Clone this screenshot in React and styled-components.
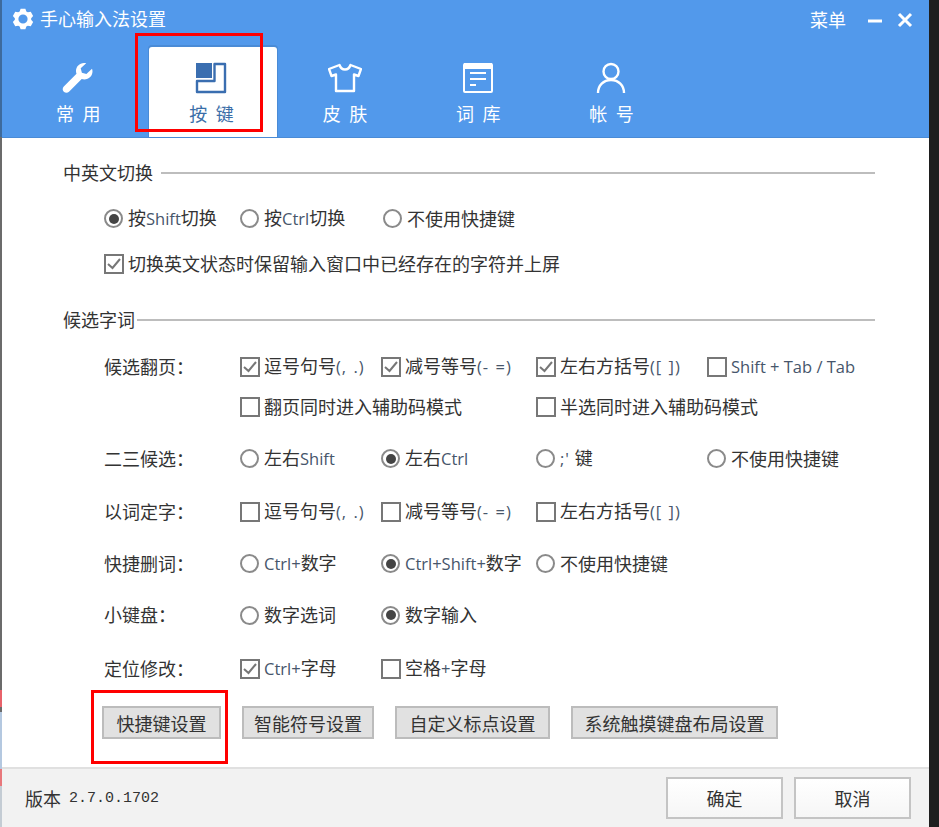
import styled, { createGlobalStyle } from "styled-components";

const GlobalStyle = createGlobalStyle`
  html, body {
    margin: 0;
    padding: 0;
    background: #1e1e1e;
  }
  body {
    width: 939px;
    height: 827px;
    overflow: hidden;
    font-family: "Open Sans", "Noto Sans CJK SC", sans-serif;
  }
`;

const Page = styled.div`
  position: relative;
  width: 939px;
  height: 827px;
  padding-left: 2px;
  box-sizing: border-box;
  background: linear-gradient(
    #3d6a9c 0 137px,
    #6b6b6b 137px 690px,
    #e8626a 690px 707px,
    #6b6b6b 707px 712px,
    #b4c8e0 712px 769px,
    #e8787c 769px 786px,
    #c4ccd4 786px
  );
  background-size: 2px 100%;
  background-repeat: no-repeat;
`;

const Window = styled.div`
  width: 927px;
  height: 827px;
  background: #fff;
  display: flex;
  flex-direction: column;
  color: #333;
  font-size: 18px;
`;

const Header = styled.div`
  height: 138px;
  box-sizing: border-box;
  background: #5299eb;
  border-bottom: 1px solid #4a8bd6;
  display: flex;
  flex-direction: column;
`;

const TitleBar = styled.div`
  height: 48px;
  display: flex;
  align-items: flex-start;
  padding: 8px 16px 0 10px;
  box-sizing: border-box;
  color: #fff;
`;

const Title = styled.span`
  margin-left: 6px;
  font-size: 18px;
  line-height: 22px;
  flex: 1;
`;

const Menu = styled.span`
  font-size: 18px;
  line-height: 24px;
  margin-right: 7px;
`;

const WinButton = styled.svg`
  width: 16px;
  height: 16px;
  margin-left: 14px;
  margin-top: 4px;
`;

const TabStrip = styled.div`
  display: flex;
  gap: 5.33px;
  padding-left: 14px;
  height: 90px;
`;

const Tab = styled.div`
  width: 128px;
  height: 90px;
  box-sizing: border-box;
  padding-top: 15px;
  display: flex;
  flex-direction: column;
  align-items: center;
  border-radius: 3px 3px 0 0;
  background: ${(props) => (props.$active ? "#fff" : "transparent")};
  box-shadow: ${(props) => (props.$active ? "0 -1px 0 1px #4a8bd6" : "none")};
  color: ${(props) => (props.$active ? "#3a6ea8" : "#fff")};
`;

const TabIcon = styled.svg`
  width: 34px;
  height: 32px;
  display: block;
  margin-right: 4px;
`;

const TabLabel = styled.span`
  margin-top: 8px;
  font-size: 18px;
  line-height: 24px;
  letter-spacing: 8.5px;
  margin-right: -5px;
`;

const Content = styled.div`
  flex: 1;
  padding: 23px 54px 0 61px;
`;

const SectionHead = styled.div`
  display: flex;
  align-items: center;
  height: 24px;
  gap: ${(props) => props.$gap}px;
  margin-top: ${(props) => props.$top || 0}px;
  line-height: 24px;

  &::after {
    content: "";
    flex: 1;
    height: 2px;
    background: #bdbdbd;
  }
`;

const Rows = styled.div`
  padding-left: 41px;
`;

const Row = styled.div`
  display: grid;
  grid-template-columns: ${(props) => props.$columns || "136px 141px 155px 171px auto"};
  align-items: center;
  height: 24px;
  margin-top: ${(props) => props.$top}px;
  white-space: nowrap;
`;

const RowLabel = styled.span`
  line-height: 24px;
`;

const Option = styled.label`
  display: flex;
  align-items: center;
  gap: ${(props) => props.$gap}px;
  line-height: 24px;
  grid-column: ${(props) => props.$col || "auto"};
`;

const Latin = styled.span`
  font-size: 16.5px;
  color: #47566b;
`;

const Punct = styled(Latin)`
  letter-spacing: 1px;
  word-spacing: 1px;
`;

const RadioMark = styled.span`
  width: 19px;
  height: 19px;
  box-sizing: border-box;
  border: 2px solid #8a8a8a;
  border-radius: 50%;
  display: flex;
  align-items: center;
  justify-content: center;
  background: #fff;

  &::after {
    content: "";
    width: 10px;
    height: 10px;
    border-radius: 50%;
    background: ${(props) => (props.$on ? "#444" : "transparent")};
  }
`;

const CheckMark = styled.span`
  width: 20px;
  height: 20px;
  box-sizing: border-box;
  border: 2px solid #777;
  display: flex;
  align-items: center;
  justify-content: center;
  background: #fff;
`;

const ButtonRow = styled.div`
  display: flex;
  gap: 21px;
  margin-top: 26px;
  padding-left: 39px;
`;

const GreyButton = styled.div`
  height: 33px;
  box-sizing: border-box;
  width: ${(props) => props.$w}px;
  background: #e1e1e1;
  border: 2px solid #bcbcbc;
  display: flex;
  align-items: center;
  justify-content: center;
  white-space: nowrap;
`;

const Footer = styled.div`
  height: 60px;
  box-sizing: border-box;
  background: #f2f2f2;
  border-top: 2px solid #e0e0e0;
  display: flex;
  align-items: flex-start;
  padding: 8px 18px 0 23px;
`;

const Version = styled.div`
  flex: 1;
  display: flex;
  gap: 8px;
  line-height: 26px;
  margin-top: 9px;
`;

const VersionNumber = styled.span`
  font-family: "Liberation Mono", monospace;
  font-size: 15px;
`;

const FooterButton = styled.div`
  width: 117px;
  height: 42px;
  box-sizing: border-box;
  margin-left: 11px;
  background: linear-gradient(#fff, #f6f6f6);
  border: 2px solid #c4c4c4;
  display: flex;
  align-items: center;
  justify-content: center;
`;

const Highlight = styled.div`
  position: absolute;
  box-sizing: border-box;
  border: 3px solid #f00;
  left: ${(props) => props.$x}px;
  top: ${(props) => props.$y}px;
  width: ${(props) => props.$w}px;
  height: ${(props) => props.$h}px;
`;

const Radio = ({ on, col, children }) => (
  <Option $col={col} $gap={5}>
    <RadioMark $on={on} />
    <span>{children}</span>
  </Option>
);

const Check = ({ on, col, children }) => (
  <Option $col={col} $gap={4}>
    <CheckMark>
      {on && (
        <svg width="14" height="12" viewBox="0 0 14 12">
          <path d="M1 6 L5.500 10 L13 1" fill="none" stroke="#777" strokeWidth="2" />
        </svg>
      )}
    </CheckMark>
    <span>{children}</span>
  </Option>
);

// six teeth, pointing up, down and along the diagonals
const gearPath = () => {
  const cx = 11;
  const cy = 11;
  const pt = (r, deg) => {
    const a = ((deg - 90) * Math.PI) / 180;
    return `${(cx + r * Math.cos(a)).toFixed(2)} ${(cy + r * Math.sin(a)).toFixed(2)}`;
  };
  let d = "";
  for (let i = 0; i < 6; i++) {
    const c = i * 60;
    d += `${i === 0 ? "M" : "L"}${pt(8.2, c - 24)}L${pt(10.6, c - 13)}L${pt(10.6, c + 13)}L${pt(8.2, c + 24)}`;
  }
  return `${d}Z M${cx - 4.6} ${cy}a4.600 4.600 0 1 0 9.200 0a4.600 4.600 0 1 0 -9.200 0Z`;
};

const tabs = [
  {
    label: "常用",
    icon: (
      <path
        fill="#fff"
        d="M23 1c-4.600 0-8 3.700-8 8 0 1 .2 2 .5 2.800L2.800 24.500c-1.500 1.500-1.500 3.800 0 5.200 1.500 1.500 3.800 1.500 5.200 0l12.700-12.700c.8.3 1.700.5 2.700.5 4.600 0 8.100-3.700 8.100-8 0-1-.2-2-.5-2.800l-5.600 5.200-4.500-1.200-1.200-4.500L25.200 1.300C24.500 1.100 23.800 1 23 1z"
      />
    ),
  },
  {
    label: "按键",
    active: true,
    icon: (
      <>
        <rect x="2" y="1" width="16" height="15" fill="#3a6eb0" />
        <path
          d="M20.500 2H31v28H3v-11h17.500z"
          fill="none"
          stroke="#3a6eb0"
          strokeWidth="2.400"
          strokeLinejoin="round"
        />
      </>
    ),
  },
  {
    label: "皮肤",
    icon: (
      <path
        d="M11.500 3C12.500 6 14.500 7.500 17 7.500S21.500 6 22.500 3L33 7l-2.500 7-4.500-1.500v16.500H8V12.500l-4.500 1.500L1 7z"
        fill="none"
        stroke="#fff"
        strokeWidth="2.400"
        strokeLinejoin="round"
      />
    ),
  },
  {
    label: "词库",
    icon: (
      <>
        <rect x="3" y="2" width="28" height="28" rx="1" fill="none" stroke="#fff" strokeWidth="2" />
        <rect x="3" y="1" width="28" height="6" fill="#fff" />
        <path d="M9 11h16M9 17h16M9 23h6" fill="none" stroke="#fff" strokeWidth="2" />
      </>
    ),
  },
  {
    label: "帐号",
    icon: (
      <>
        <circle cx="17" cy="9.500" r="7.500" fill="none" stroke="#fff" strokeWidth="2.400" />
        <path d="M4 31c0-7.500 5.500-13 13-13s13 5.500 13 13" fill="none" stroke="#fff" strokeWidth="2.400" />
      </>
    ),
  },
];

const App = () => {
  return (
    <Page>
      <GlobalStyle />
      <Window>
        <Header>
          <TitleBar>
            <svg width="22" height="22" viewBox="0 0 22 22">
              <path fill="#fff" fillRule="evenodd" d={gearPath()} />
            </svg>
            <Title>手心输入法设置</Title>
            <Menu>菜单</Menu>
            <WinButton viewBox="0 0 16 16">
              <path d="M1 9h14" stroke="#fff" strokeWidth="3" />
            </WinButton>
            <WinButton viewBox="0 0 16 16">
              <path d="M2 2l12 12M14 2L2 14" stroke="#fff" strokeWidth="3" />
            </WinButton>
          </TitleBar>
          <TabStrip>
            {tabs.map((tab) => (
              <Tab key={tab.label} $active={tab.active}>
                <TabIcon viewBox="0 0 34 32">{tab.icon}</TabIcon>
                <TabLabel>{tab.label}</TabLabel>
              </Tab>
            ))}
          </TabStrip>
        </Header>
        <Content>
          <SectionHead $gap={8}>中英文切换</SectionHead>
          <Rows>
            <Row $top={21} $columns="136px 143px auto">
              <Radio on>
                按<Latin>Shift</Latin>切换
              </Radio>
              <Radio>
                按<Latin>Ctrl</Latin>切换
              </Radio>
              <Radio>不使用快捷键</Radio>
            </Row>
            <Row $top={22} $columns="auto">
              <Check on>切换英文状态时保留输入窗口中已经存在的字符并上屏</Check>
            </Row>
          </Rows>
          <SectionHead $gap={2} $top={32}>
            候选字词
          </SectionHead>
          <Rows>
            <Row $top={22}>
              <RowLabel>候选翻页：</RowLabel>
              <Check on>
                逗号句号<Punct>(, .)</Punct>
              </Check>
              <Check on>
                减号等号<Punct>(- =)</Punct>
              </Check>
              <Check on>
                左右方括号<Punct>([ ])</Punct>
              </Check>
              <Check>
                <Latin>Shift + Tab / Tab</Latin>
              </Check>
            </Row>
            <Row $top={17}>
              <Check col="2 / 4">翻页同时进入辅助码模式</Check>
              <Check col="4 / 6">半选同时进入辅助码模式</Check>
            </Row>
            <Row $top={27}>
              <RowLabel>二三候选：</RowLabel>
              <Radio>
                左右<Latin>Shift</Latin>
              </Radio>
              <Radio on>
                左右<Latin>Ctrl</Latin>
              </Radio>
              <Radio>
                <Punct>;&#39;</Punct> 键
              </Radio>
              <Radio>不使用快捷键</Radio>
            </Row>
            <Row $top={29}>
              <RowLabel>以词定字：</RowLabel>
              <Check>
                逗号句号<Punct>(, .)</Punct>
              </Check>
              <Check>
                减号等号<Punct>(- =)</Punct>
              </Check>
              <Check>
                左右方括号<Punct>([ ])</Punct>
              </Check>
            </Row>
            <Row $top={28}>
              <RowLabel>快捷删词：</RowLabel>
              <Radio>
                <Latin>Ctrl+</Latin>数字
              </Radio>
              <Radio on>
                <Latin>Ctrl+Shift+</Latin>数字
              </Radio>
              <Radio>不使用快捷键</Radio>
            </Row>
            <Row $top={28}>
              <RowLabel>小键盘：</RowLabel>
              <Radio>数字选词</Radio>
              <Radio on>数字输入</Radio>
            </Row>
            <Row $top={29}>
              <RowLabel>定位修改：</RowLabel>
              <Check on>
                <Latin>Ctrl+</Latin>字母
              </Check>
              <Check>
                空格<Latin>+</Latin>字母
              </Check>
            </Row>
          </Rows>
          <ButtonRow>
            <GreyButton $w={119}>快捷键设置</GreyButton>
            <GreyButton $w={132}>智能符号设置</GreyButton>
            <GreyButton $w={155}>自定义标点设置</GreyButton>
            <GreyButton $w={207}>系统触摸键盘布局设置</GreyButton>
          </ButtonRow>
        </Content>
        <Footer>
          <Version>
            版本
            <VersionNumber>2.7.0.1702</VersionNumber>
          </Version>
          <FooterButton>确定</FooterButton>
          <FooterButton>取消</FooterButton>
        </Footer>
      </Window>
      <Highlight $x={135} $y={33} $w={128} $h={99} />
      <Highlight $x={91} $y={690} $w={137} $h={74} />
    </Page>
  );
};

export default App;
